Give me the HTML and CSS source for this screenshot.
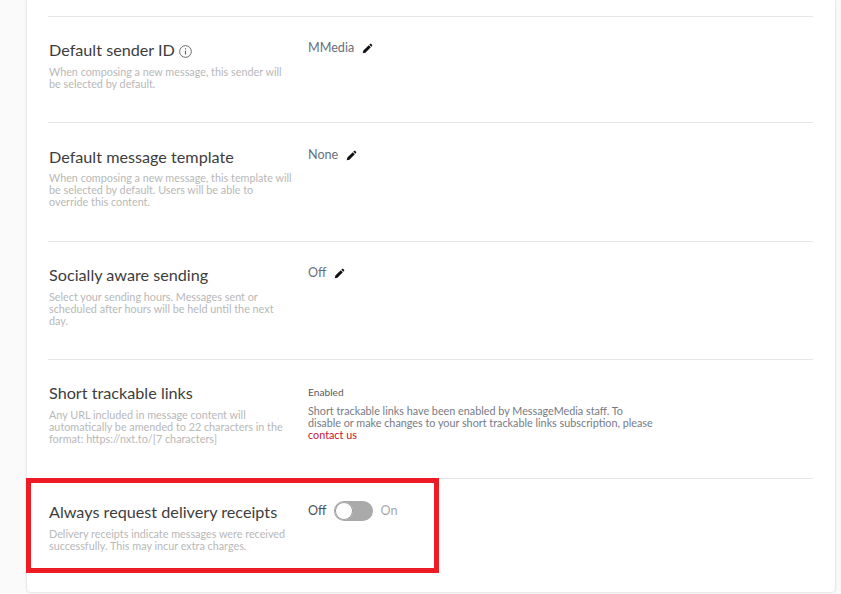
FILE: index.html
```html
<!DOCTYPE html>
<html lang="en">
<head>
<meta charset="utf-8">
<title>Settings</title>
<link rel="stylesheet" href="styles.css">
</head>
<body>
<main class="card">
  <section class="row">
    <div class="info">
      <h3 class="title">Default sender ID <svg class="info-icon" viewBox="0 0 12 12"><circle cx="6" cy="6" r="5.4" fill="none" stroke="#666" stroke-width="0.9"/><path d="M6 5.2v3.6M6 3.1v1.1" stroke="#666" stroke-width="1.1" fill="none"/></svg></h3>
      <p class="desc">When composing a new message, this sender will be selected by default.</p>
    </div>
    <div class="value"><span>MMedia</span><svg class="pencil" viewBox="0 0 12 12"><path d="M0.8 11.2l0.7-2.9 5.9-5.9 2.2 2.2-5.9 5.9zM8 1.8l.9-.9q.5-.4 1 0l1.2 1.2q.4.5 0 1l-.9.9z" fill="#111"/></svg></div>
  </section>
  <section class="row">
    <div class="info">
      <h3 class="title">Default message template</h3>
      <p class="desc">When composing a new message, this template will be selected by default. Users will be able to override this content.</p>
    </div>
    <div class="value"><span>None</span><svg class="pencil" viewBox="0 0 12 12"><path d="M0.8 11.2l0.7-2.9 5.9-5.9 2.2 2.2-5.9 5.9zM8 1.8l.9-.9q.5-.4 1 0l1.2 1.2q.4.5 0 1l-.9.9z" fill="#111"/></svg></div>
  </section>
  <section class="row">
    <div class="info">
      <h3 class="title">Socially aware sending</h3>
      <p class="desc">Select your sending hours. Messages sent or scheduled after hours will be held until the next day.</p>
    </div>
    <div class="value"><span>Off</span><svg class="pencil" viewBox="0 0 12 12"><path d="M0.8 11.2l0.7-2.9 5.9-5.9 2.2 2.2-5.9 5.9zM8 1.8l.9-.9q.5-.4 1 0l1.2 1.2q.4.5 0 1l-.9.9z" fill="#111"/></svg></div>
  </section>
  <section class="row">
    <div class="info">
      <h3 class="title">Short trackable links</h3>
      <p class="desc">Any URL included in message content will automatically be amended to 22 characters in the format: https://nxt.to/[7 characters]</p>
    </div>
    <div class="links">
      <div class="status">Enabled</div>
      <p class="note">Short trackable links have been enabled by MessageMedia staff. To disable or make changes to your short trackable links subscription, please <a class="contact" href="#">contact us</a></p>
    </div>
  </section>
  <section class="row last">
    <div class="info">
      <h3 class="title">Always request delivery receipts</h3>
      <p class="desc">Delivery receipts indicate messages were received successfully. This may incur extra charges.</p>
    </div>
    <div class="toggle-wrap">
      <span class="off">Off</span>
      <span class="toggle"><span class="knob"></span></span>
      <span class="on">On</span>
    </div>
    <div class="highlight"></div>
  </section>
</main>
</body>
</html>
```
FILE: styles.css
```css
* { box-sizing: border-box; }
html, body { margin: 0; height: 594px; overflow: hidden; }
body { background: #fafafa; font-family: Lato, "Open Sans", sans-serif; }
.card {
  width: 808px;
  height: 592px;
  margin-left: 27px;
  padding: 16px 22px 0 21px;
  background: #fff;
  border-radius: 0 0 4px 4px;
  box-shadow: 0 0 3px rgba(0, 0, 0, 0.18);
}
.row {
  position: relative;
  display: flex;
  border-top: 1px solid #e6e6e6;
  padding-top: 23px;
  height: 106px;
}
.row:nth-child(2) { height: 119px; padding-top: 24px; }
.row:nth-child(3) { height: 118px; }
.row:nth-child(4) { height: 119px; }
.info { width: 260px; flex: none; padding-left: 1px; }
.title {
  margin: 0;
  font-size: 16.2px;
  line-height: 20px;
  font-weight: 400;
  color: #3d3d3d;
}
.info-icon { width: 13px; height: 13px; vertical-align: -2px; }
.desc {
  margin: 6px 0 0;
  width: 245px;
  font-size: 10.8px;
  line-height: 12px;
  color: #b8b8b8;
}
.row:nth-child(2) .desc { margin-top: 5px; }
.value {
  display: flex;
  align-items: flex-start;
  font-size: 12.6px;
  line-height: 16px;
  color: #66707a;
}
.pencil { width: 11px; height: 11px; margin: 3px 0 0 8px; }
.links { width: 350px; margin-top: 2px; }
.status { font-size: 10.2px; line-height: 14px; color: #5c5c5c; }
.note {
  margin: 6px 0 0;
  font-size: 10.8px;
  line-height: 12px;
  color: #767b84;
}
.contact { color: #c8102e; text-decoration: none; }
.toggle-wrap {
  display: flex;
  align-items: center;
  align-self: flex-start;
  margin-top: -1px;
  font-size: 12.6px;
  line-height: 20px;
}
.off { color: #4a4f5a; }
.on { color: #a8a8a8; margin-left: 7px; }
.toggle {
  width: 39px;
  height: 20px;
  margin-left: 8px;
  padding: 1px;
  border-radius: 10px;
  background: #aaa;
  display: block;
}
.knob {
  display: block;
  width: 18px;
  height: 18px;
  border-radius: 50%;
  background: #fff;
  box-shadow: inset 0 0 0 1px #999;
}
.highlight {
  position: absolute;
  left: -22px;
  top: -1px;
  width: 413px;
  height: 95px;
  border: 5px solid #ed1c24;
}
```
